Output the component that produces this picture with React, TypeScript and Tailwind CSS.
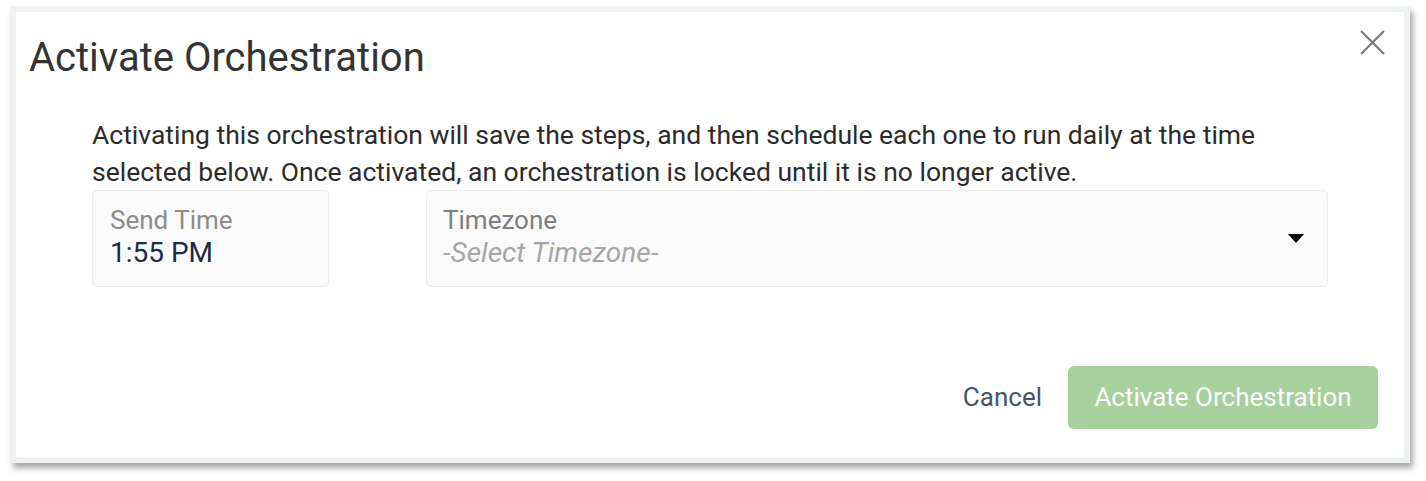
const font = { fontFamily: "Roboto, 'Noto Sans', sans-serif" };

export default function App() {
  return (
    <div className="w-[1426px] h-[481px] bg-white" style={font}>
      <div className="ml-[10px] mt-[6px] w-[1400px] h-[457px] bg-[#eef3f2] p-[6px] shadow-[3px_5px_6px_rgba(0,0,0,0.35)]">
        <div className="relative h-full bg-white">
          {/* Header */}
          <div className="flex items-start justify-between pl-[13px] pr-[19px] pt-[22px]">
            <h2 className="text-[40px] leading-[48px] text-[#333333]">Activate Orchestration</h2>
            <button className="mt-[-4px]">
              <svg width="25" height="25" viewBox="0 0 25 25">
                <path d="M1 1 L24 24 M24 1 L1 24" stroke="#777777" strokeWidth="2.2" />
              </svg>
            </button>
          </div>

          {/* Body */}
          <div className="px-[76px] mt-[34px]">
            <p className="text-[26.5px] leading-[37px] text-[#2b2b2b]">
              Activating this orchestration will save the steps, and then schedule each one to run daily at the time
              selected below. Once activated, an orchestration is locked until it is no longer active.
            </p>
            <div className="flex gap-[97px]">
              <div className="w-[237px] h-[97px] shrink-0 rounded-[5px] border border-[#ebebeb] bg-[#fafafa] px-[17px] pt-[14px]">
                <div className="text-[26px] leading-[31px] text-[#8c8c8c]">Send Time</div>
                <div className="text-[28px] leading-[34px] text-[#1e2a44]">1:55 PM</div>
              </div>
              <div className="flex-1 h-[97px] rounded-[5px] border border-[#ebebeb] bg-[#fafafa] pl-[16px] pr-[23px] pt-[14px] flex items-center justify-between">
                <div className="self-start">
                  <div className="text-[26px] leading-[31px] text-[#7f7f7f]">Timezone</div>
                  <div className="text-[28px] leading-[34px] italic text-[#a6a6a6]">-Select Timezone-</div>
                </div>
                <svg width="16" height="9" viewBox="0 0 16 9" className="-mt-[14px]">
                  <path d="M0 0 L16 0 L8 9 Z" fill="#000" />
                </svg>
              </div>
            </div>
          </div>

          {/* Footer */}
          <div className="absolute right-[26px] bottom-[28px] flex items-center gap-[26px]">
            <button className="text-[26px] text-[#4a5466]">Cancel</button>
            <button className="h-[63px] w-[310px] rounded-[6px] bg-[#a6d09c] text-[26px] text-white">
              Activate Orchestration
            </button>
          </div>
        </div>
      </div>
    </div>
  );
}
